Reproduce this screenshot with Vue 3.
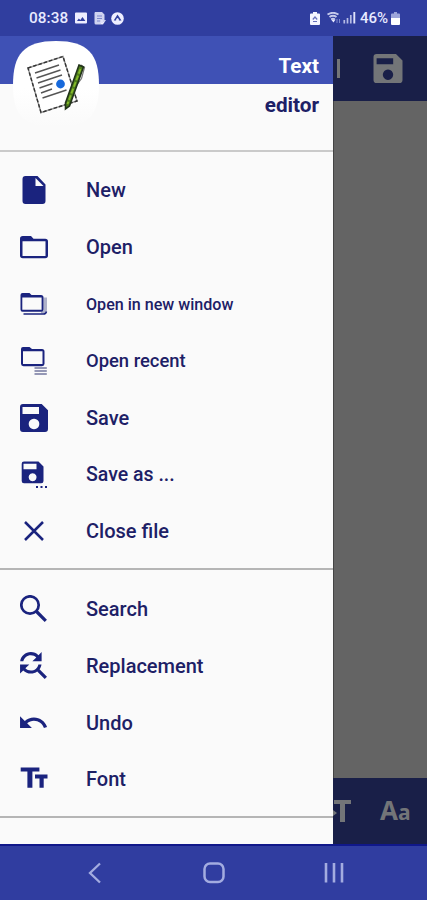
<script setup>
const fileOps = [
  { id: 'new', label: 'New' },
  { id: 'open', label: 'Open' },
  { id: 'window', label: 'Open in new window', size: 'small' },
  { id: 'recent', label: 'Open recent', size: 'medium' },
  { id: 'save', label: 'Save' },
  { id: 'saveas', label: 'Save as ...', size: 'large' },
  { id: 'close', label: 'Close file' },
]
const editOps = [
  { id: 'search', label: 'Search' },
  { id: 'replace', label: 'Replacement' },
  { id: 'undo', label: 'Undo' },
  { id: 'font', label: 'Font' },
]
const groups = [fileOps, editOps]
</script>

<template>
  <div class="screen">
    <header class="status">
      <div class="status-left">
        <span class="time">08:38</span>
        <svg class="s-img" viewBox="0 0 12 12"><path fill="#eef" fill-rule="evenodd" d="M1 .5h10q1 0 1 1v9q0 1-1 1H1q-1 0-1-1v-9q0-1 1-1zM2 9h8.400L7.500 5 5.300 8 3.800 6.500z" /></svg>
        <svg class="s-doc" viewBox="0 0 12 13"><path fill="#cfd3f0" d="M1 0h7l2.500 2.500V8H12l-3 4.500H2Q.5 12.500.5 11V1z" /><path d="M3 4h5M3 6.500h5M3 9h3" stroke="#7d87cb" fill="none" /><path d="M8 8v4M6.500 10.500 8 12l2-2" stroke="#eef" fill="none" /></svg>
        <svg class="s-circle" viewBox="0 0 13 13"><circle cx="6.500" cy="6.500" r="6.300" fill="#eef" /><path d="M6.500 2.500 2.700 8.500H5L6.500 6 8 8.500h2.500z" fill="#303f9f" /><circle cx="6.500" cy="7.500" r="1.200" fill="#eef" /></svg>
      </div>
      <div class="status-right">
        <svg class="s-clip" viewBox="0 0 10 13"><path fill="#f4f5ff" d="M3 0h4v1.500h2q1 0 1 1V12q0 1-1 1H1q-1 0-1-1V2.500q0-1 1-1h2z" /><path d="M2.800 7.500 5 5l2.200 2.500M3 9.500h4" stroke="#6670bb" fill="none" stroke-width="1.200" /></svg>
        <svg class="s-wifi" viewBox="0 0 14 12"><path d="M.5 2.500Q6 -1 11.500 2.500M2.500 5Q6 2.500 9.500 5M4.200 7.200Q6 6 7.800 7.200" stroke="#c5caeb" stroke-width="1.800" fill="none" /><path d="m4 7.500 2.500 3 2-3z" fill="#e8eaff" /><path d="M10 7v4M12.500 7v4" stroke="#7f89cb" /></svg>
        <svg class="s-signal" viewBox="0 0 13 12"><path d="M1.300 8v3.500M4.500 6v5.500M7.800 3v8.500" stroke="#b5bbe5" stroke-width="1.700" /><path d="M11.300 0v11.500" stroke="#dfe2fa" stroke-width="1.900" /></svg>
        <span class="pct">46%</span>
        <svg class="s-batt" viewBox="0 0 9 13"><path fill="#9da5da" d="M3 0h3v1.500h2q1 0 1 1V6H0V2.500q0-1 1-1h2z" /><path fill="#fff" d="M0 6h9v6q0 1-1 1H1q-1 0-1-1z" /></svg>
      </div>
    </header>

    <main class="body">
      <aside class="drawer">
        <div class="head">
          <div class="head-top"><b class="title">Text</b></div>
          <div class="head-bottom"><b class="subtitle">editor</b></div>
          <svg class="logo" viewBox="0 0 88 88">
            <defs><linearGradient id="fade" x1="0" y1="0" x2="0" y2="1"><stop offset=".55" stop-color="#fff" /><stop offset="1" stop-color="#fafafa" /></linearGradient></defs>
            <path fill="url(#fade)" d="M44 0C76 0 87 13 87 44S76 86 44 86 1 75 1 44 12 0 44 0z" />
            <path d="M16 27 51 15.500 65 60 29 71.500z" fill="#fff" stroke="#999" stroke-width="1.400" />
            <path d="M16 27 51 15.500 65 60 29 71.500z" fill="none" stroke="#333" stroke-width="1.400" stroke-dasharray="3.500 2" />
            <path d="m23 32 24-8M24.500 37l24-8M26 42l24-8M27.500 47l13-4.500M29 52l11-4M30.500 57l24-8" stroke="#555" stroke-width="1.400" />
            <circle cx="48.500" cy="43" r="4.400" fill="#1769db" />
            <path d="m69 24 3.500 2.500-3 11-8 11" fill="none" stroke="#777" stroke-width="1.200" />
            <path d="m67 24 4.500 2-14 39-4 3v-6z" fill="#4f7d1b" stroke="#22341a" stroke-width="1.600" />
            <path d="m68.500 28-13 35" stroke="#86bb2b" stroke-width="1.800" stroke-dasharray="5 2" />
          </svg>
        </div>
        <nav v-for="(group, g) in groups" :key="g" class="group">
          <a v-for="item in group" :key="item.id" class="row">
            <svg class="icon" viewBox="0 0 28 28" fill="#1a237e">
              <path v-if="item.id === 'new'" fill-rule="evenodd" d="M5.500 0H17.500l8 8.500V25q0 3-3 3h-17q-3 0-3-3V3q0-3 3-3zM15.500 2v8h8z" />
              <path v-else-if="item.id === 'open'" fill-rule="evenodd" d="M2.800 3H11l2.500 2.700h11.700q2.800 0 2.800 2.800v14q0 2.700-2.800 2.700H2.800Q0 25.200 0 22.500V5.800Q0 3 2.800 3zM2.500 8.300v14.600h23V8.300z" />
              <g v-else-if="item.id === 'window'">
                <path d="M23.500 7.500h3.500v12q0 4-4 4h-2v-3h2.500z" fill="#aeb1c9" />
                <path fill-rule="evenodd" d="M2.500 3h7l2 2H21q2.500 0 2.500 2.500v12q0 2.300-2.500 2.300H2.500Q.5 21.800.5 19.500V5q0-2 2-2zM2.300 7.600v12.200h19.300V7.600z" />
                <path d="M3.500 24h20q2.500 0 3-2.500" fill="none" stroke="#1a237e" stroke-width="1.500" />
              </g>
              <g v-else-if="item.id === 'recent'">
                <path fill-rule="evenodd" d="M3 0h6.500L12 2h10q2.500 0 2.500 2.500v12.300q0 2.400-2.500 2.400H3.500Q1 19.200 1 16.800V2q0-2 2-2zM3 4.300v12.800h19.500V4.300z" />
                <path d="M14.500 21h12.300M14.500 24h12.300M14.500 27h12.300" stroke="#73779f" stroke-width="1.500" />
              </g>
              <path v-else-if="item.id === 'save'" fill-rule="evenodd" d="M3 0h18.700L28 6.300V25q0 3-3 3H3q-3 0-3-3V3q0-3 3-3zM2.500 3v7H19V3zM14 14.700a5.300 5.300 0 1 0 .01 0z" />
              <g v-else-if="item.id === 'saveas'">
                <path fill-rule="evenodd" d="M4 .5h14.500l5 5V20q0 2.300-2.300 2.300H4Q1.700 22.300 1.700 20V2.800Q1.700.5 4 .5zM3.500 2.700v5.500h13V2.700zM12.600 12.200a4 4 0 1 0 .01 0z" />
                <path d="M16 25h2v2h-2zM20.500 25h2v2h-2zM25 25h2v2h-2z" />
              </g>
              <path v-else-if="item.id === 'close'" d="m5 5 18 18M23 5 5 23" stroke="#1a237e" stroke-width="2.500" />
              <g v-else-if="item.id === 'search'" fill="none" stroke="#1a237e">
                <circle cx="10" cy="10" r="8.700" stroke-width="2.700" /><path d="m16.500 16.500 9.300 9.300" stroke-width="3.200" />
              </g>
              <path v-else-if="item.id === 'replace'" transform="translate(-6.100 -6.100) scale(1.540)" d="M11 6c1.380 0 2.630.56 3.540 1.460L12 10h6V4l-2.050 2.050C14.680 4.780 12.930 4 11 4c-3.530 0-6.430 2.610-6.920 6H6.100c.46-2.280 2.480-4 4.900-4zm5.640 9.140c.66-.9 1.120-1.970 1.280-3.140H15.900c-.46 2.280-2.480 4-4.900 4-1.380 0-2.630-.56-3.540-1.460L10 12H4v6l2.050-2.050C7.320 17.220 9.070 18 11 18c1.550 0 2.980-.51 4.140-1.360L20 21.490 21.490 20l-4.850-4.860z" />
              <path v-else-if="item.id === 'undo'" transform="translate(-2.600 -2) scale(1.320)" d="M12.500 8c-2.650 0-5.050.99-6.900 2.600L2 7v9h9l-3.620-3.620c1.390-1.160 3.160-1.880 5.120-1.880 3.540 0 6.550 2.310 7.600 5.500l2.370-.78C21.080 11.030 17.150 8 12.500 8z" />
              <path v-else d="M.7 2.500h18.700v4h-7v16.300h-5V6.500H.7zM15 9.500h12.500v4H23.700v9.300h-4.200v-9.300H15z" />
            </svg>
            <span class="label" :class="item.size">{{ item.label }}</span>
          </a>
        </nav>
      </aside>
      <section class="editor">
        <div class="toolbar">
          <i class="caret"></i>
          <svg class="disk" viewBox="0 0 28 28"><path fill="#737578" fill-rule="evenodd" d="M3 0h18.700L28 6.300V25q0 3-3 3H3q-3 0-3-3V3q0-3 3-3zM3 4v6h16V4zM14 15a5 5 0 1 0 .01 0z" /></svg>
        </div>
        <div class="page"></div>
        <div class="bottombar">
          <svg class="tee" viewBox="0 0 18 22"><path fill="#737578" d="M1 0h17v4h-6v18H7V4H1zM0 10l4 3-4 3z" /></svg>
          <span class="aa">A<span class="a">a</span></span>
        </div>
      </section>
    </main>

    <footer class="sysnav">
      <svg viewBox="0 0 427 56" fill="none" stroke="#a3ace0">
        <path d="m100 19.500-10 9.500 10 9.500" stroke-width="2.300" />
        <rect x="204.500" y="19.500" width="19" height="18.500" rx="5.500" stroke-width="2.500" />
        <path d="M326 19v19.500M334 19v19.500M342 19v19.500" stroke-width="2.600" />
      </svg>
    </footer>
  </div>
</template>

<style>
body { margin: 0; overflow: hidden; }
</style>
<style scoped>
.screen { width: 427px; height: 900px; display: flex; flex-direction: column; font-family: Roboto, sans-serif; overflow: hidden; color: #1d2066; }
.status { height: 36px; box-sizing: border-box; background: #303e9f; display: flex; justify-content: space-between; align-items: center; padding: 0 27px 0 29px; color: #e8eaff; flex: none; }
.status-left, .status-right { display: flex; align-items: center; }
.time { font-size: 15.300px; width: 46px; letter-spacing: .1px; font-weight: 500; }
.s-img { width: 12px; height: 12px; }
.s-doc { width: 12px; height: 13px; margin-left: 7px; }
.s-circle { width: 13px; height: 13px; margin-left: 5px; }
.s-clip { width: 10px; height: 13px; }
.s-wifi { width: 14px; height: 12px; margin-left: 7px; }
.s-signal { width: 13px; height: 12px; margin-left: 2px; }
.pct { font-size: 15px; margin-left: 4px; width: 31px; font-weight: 500; }
.s-batt { width: 9px; height: 13px; }
.body { display: flex; height: 808px; flex: none; }
.drawer { width: 333px; background: #fafafa; flex: none; overflow: hidden; }
.head { height: 114px; position: relative; border-bottom: 2px solid #cacaca; }
.head-top { height: 48px; background: #3f51b5; box-sizing: border-box; padding: 18px 14px 0 0; text-align: right; color: #fff; }
.head-bottom { padding: 9px 14px 0 0; text-align: right; }
.title, .subtitle { display: block; font-size: 20.700px; line-height: 24px; font-weight: 700; }
.logo { position: absolute; left: 12px; top: 5px; width: 88px; height: 88px; }
.group { padding: 10px 0 8.500px; border-bottom: 2px solid #b5b5b5; }
.row { height: 56.850px; display: flex; align-items: center; padding-left: 19.500px; }
.icon { width: 28px; height: 28px; margin-right: 38.500px; flex: none; }
.label { font-size: 20px; font-weight: 500; line-height: 24px; white-space: nowrap; }
.label.small { font-size: 16.100px; padding-top: 1px; }
.label.medium { font-size: 18.400px; padding-top: 1px; }
.label.large { font-size: 19.500px; }
.editor { flex: 1; display: flex; flex-direction: column; background: #646464; box-shadow: inset 1px 0 #444; }
.toolbar { height: 65px; background: #191f48; display: flex; align-items: center; }
.caret { width: 3px; height: 19px; background: #737578; margin-left: 4px; }
.disk { width: 30px; height: 29px; margin-left: 33px; }
.page { flex: 1; }
.bottombar { height: 66px; background: #191f48; display: flex; align-items: center; color: #737578; }
.tee { width: 18px; height: 22px; }
.aa { margin-left: 29px; font: 700 26px/30px "Noto Sans", sans-serif; }
.a { font-size: 21px; }
.sysnav { height: 56px; flex: none; background: #303da0; box-shadow: inset 0 2px #10188a; }
.sysnav svg { display: block; width: 427px; height: 56px; }
</style>
